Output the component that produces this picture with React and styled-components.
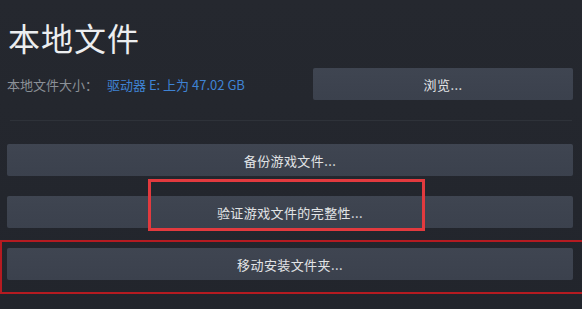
import styled, { createGlobalStyle } from "styled-components";

const GlobalStyle = createGlobalStyle`
  html, body {
    margin: 0;
    padding: 0;
    background: #23262d;
  }
  body {
    font-family: "Noto Sans CJK SC", "Noto Sans", sans-serif;
  }
`;

const Page = styled.div`
  position: relative;
  width: 582px;
  height: 309px;
  overflow: hidden;
  box-sizing: border-box;
  padding: 21px 9px 0 7px;
  background: linear-gradient(180deg, #25282f 0%, #22252c 100%);
`;

const Title = styled.h1`
  margin: 0 0 15px 1px;
  font-size: 32px;
  line-height: 32px;
  font-weight: 400;
  letter-spacing: 1px;
  color: #eceef0;
`;

const SizeRow = styled.div`
  display: flex;
  align-items: center;
  justify-content: space-between;
  height: 32px;
`;

const SizeLabel = styled.div`
  font-size: 13px;
  color: #8b9097;
  span {
    color: #3f83d4;
    margin-left: 9px;
  }
`;

const Button = styled.button`
  display: flex;
  align-items: center;
  justify-content: center;
  width: ${props => props.width || "100%"};
  height: 32px;
  padding: 0;
  border: none;
  border-radius: 2px;
  background: linear-gradient(180deg, #3f4551 0%, #3b414d 100%);
  color: #e2e4e6;
  font-family: inherit;
  font-size: 13px;
  letter-spacing: 0.4px;
  cursor: pointer;
`;

const Separator = styled.div`
  height: 1px;
  margin: 20px 1px 23px 3px;
  background: #2e3239;
`;

const ButtonList = styled.div`
  display: flex;
  flex-direction: column;
  gap: 20px;
`;

const Highlight = styled.div`
  position: absolute;
  left: ${props => props.x}px;
  top: ${props => props.y}px;
  width: ${props => props.w}px;
  height: ${props => props.h}px;
  box-sizing: border-box;
  border: ${props => props.thick}px solid ${props => props.color};
  pointer-events: none;
`;

export default function App() {
  return (
    <>
      <GlobalStyle />
      <Page>
        <Title>本地文件</Title>
        <SizeRow>
          <SizeLabel>
            本地文件大小：<span>驱动器 E: 上为 47.02 GB</span>
          </SizeLabel>
          <Button width="260px">浏览...</Button>
        </SizeRow>
        <Separator />
        <ButtonList>
          <Button>备份游戏文件...</Button>
          <Button>验证游戏文件的完整性...</Button>
          <Button>移动安装文件夹...</Button>
        </ButtonList>
        <Highlight x={148} y={179} w={277} h={52} thick={3} color="#e23a3e" />
        <Highlight x={0} y={240} w={590} h={54} thick={2} color="#b51b21" />
      </Page>
    </>
  );
}
